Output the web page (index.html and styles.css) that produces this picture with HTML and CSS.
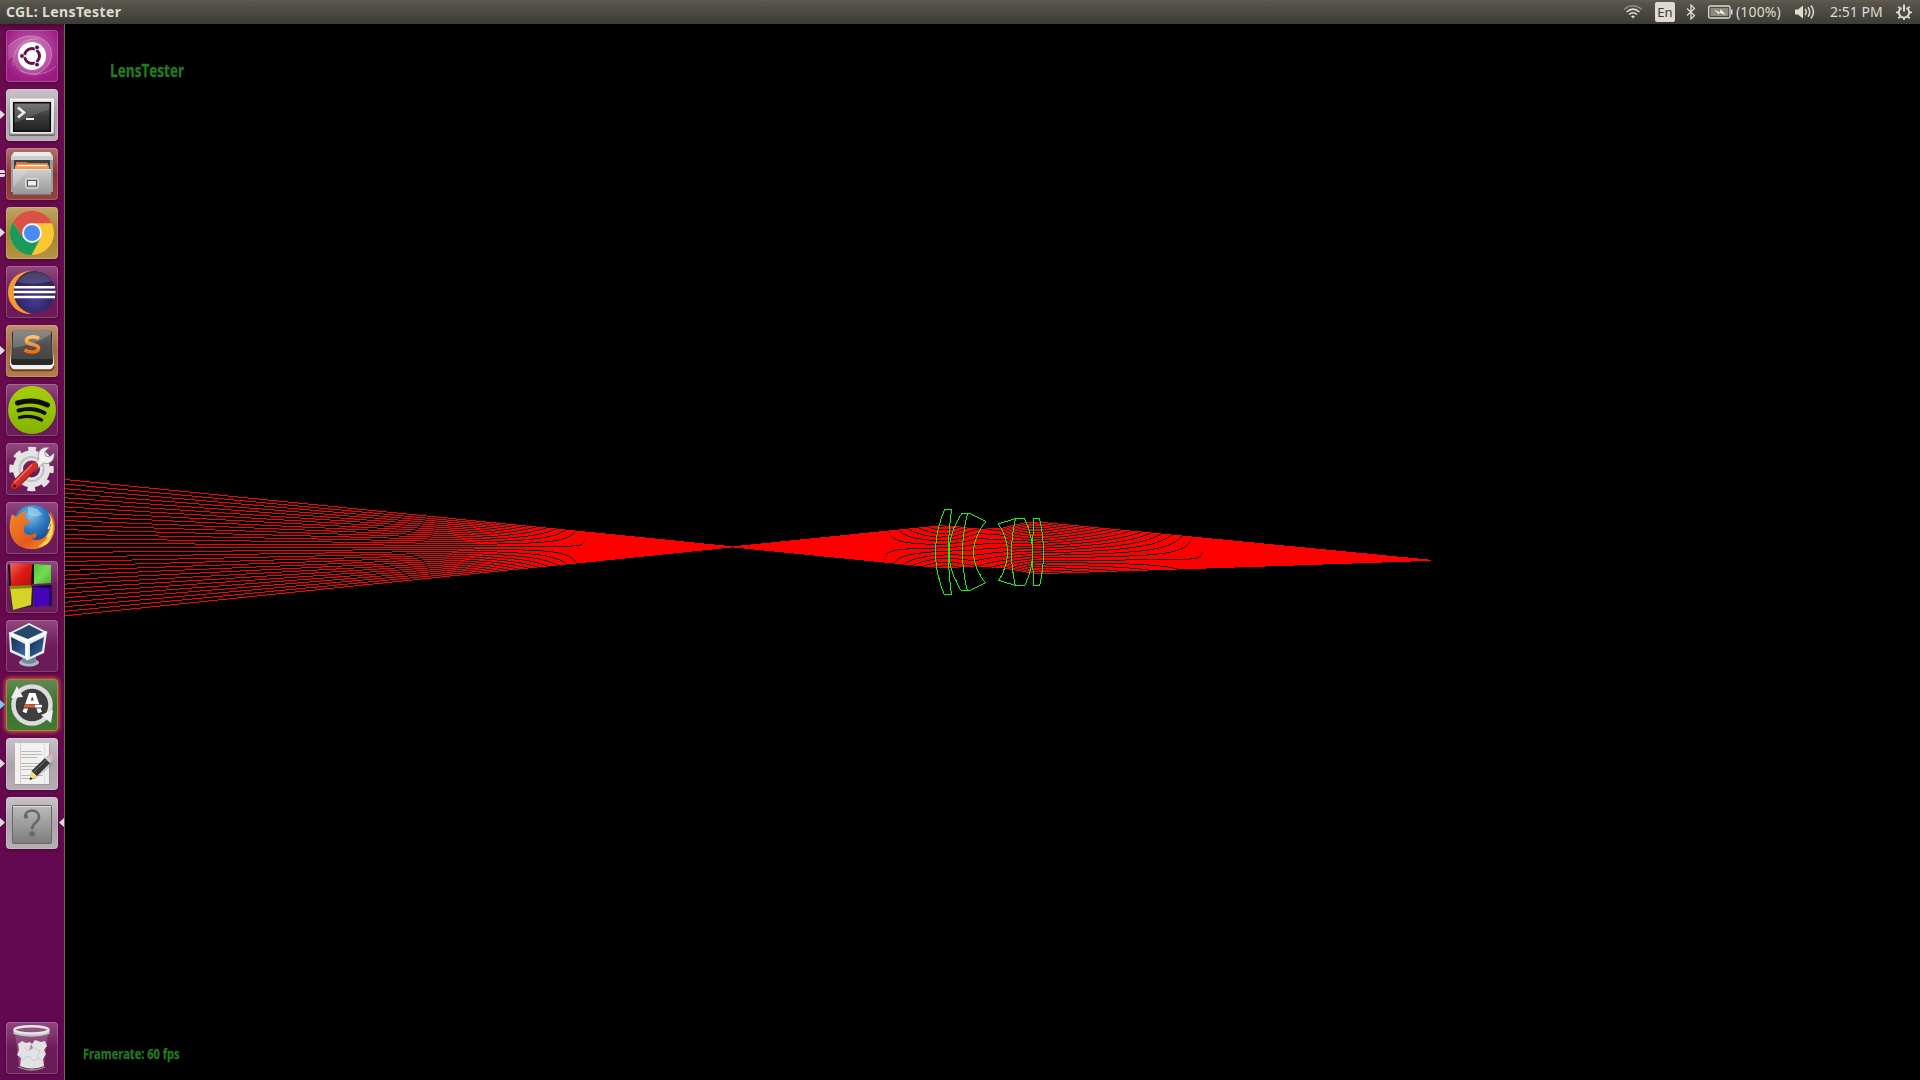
FILE: index.html
```html
<!DOCTYPE html>
<html lang="en">
<head>
<meta charset="utf-8">
<title>CGL: LensTester</title>
<link rel="stylesheet" href="styles.css">
</head>
<body>
<svg class="defs" width="0" height="0" aria-hidden="true">
  <defs>
    <linearGradient id="metal" x1="0" y1="0" x2="0" y2="1"><stop offset="0" stop-color="#f2f2f2"/><stop offset="1" stop-color="#9b9b9b"/></linearGradient>
    <linearGradient id="drawer" x1="0" y1="0" x2="0" y2="1"><stop offset="0" stop-color="#cfcfcf"/><stop offset="1" stop-color="#979797"/></linearGradient>
    <linearGradient id="screen" x1="0" y1="0" x2="0" y2="1"><stop offset="0" stop-color="#626262"/><stop offset=".5" stop-color="#3a3a3a"/><stop offset="1" stop-color="#222"/></linearGradient>
    <linearGradient id="keycap" x1="0" y1="0" x2="0" y2="1"><stop offset="0" stop-color="#6e6e6e"/><stop offset=".5" stop-color="#505050"/><stop offset="1" stop-color="#454545"/></linearGradient>
    <linearGradient id="grey" x1="0" y1="0" x2="0" y2="1"><stop offset="0" stop-color="#bcbcbc"/><stop offset="1" stop-color="#7c7c7c"/></linearGradient>
    <linearGradient id="folder" x1="0" y1="0" x2="0" y2="1"><stop offset="0" stop-color="#e2622c"/><stop offset="1" stop-color="#f7b96c"/></linearGradient>
    <radialGradient id="eclipse" cx=".5" cy=".65" r=".6"><stop offset="0" stop-color="#4a3c96"/><stop offset=".55" stop-color="#352a72"/><stop offset="1" stop-color="#2a2350"/></radialGradient>
    <linearGradient id="orange" x1="0" y1="0" x2="0" y2="1"><stop offset="0" stop-color="#ffc36b"/><stop offset="1" stop-color="#f56a0a"/></linearGradient>
    <linearGradient id="spot" x1="0" y1="0" x2="0" y2="1"><stop offset="0" stop-color="#a6d00c"/><stop offset="1" stop-color="#82b300"/></linearGradient>
    <radialGradient id="globe" cx=".45" cy=".25" r=".7"><stop offset="0" stop-color="#7fc4ea"/><stop offset=".5" stop-color="#2a76bd"/><stop offset="1" stop-color="#163f80"/></radialGradient>
    <linearGradient id="fox" x1="0" y1="0" x2="1" y2="1"><stop offset="0" stop-color="#f28a28"/><stop offset=".6" stop-color="#e45a1e"/><stop offset="1" stop-color="#f7a52a"/></linearGradient>
    <linearGradient id="redbox" x1="0" y1="0" x2="1" y2="1"><stop offset="0" stop-color="#f06a5c"/><stop offset=".5" stop-color="#dc1a14"/><stop offset="1" stop-color="#b80e0a"/></linearGradient>
    <linearGradient id="greenbox" x1="0" y1="0" x2="1" y2="1"><stop offset="0" stop-color="#4ec62c"/><stop offset=".5" stop-color="#74dc54"/><stop offset="1" stop-color="#44b822"/></linearGradient>
    <linearGradient id="vbox" x1="0" y1="0" x2="1" y2="1"><stop offset="0" stop-color="#132c4c"/><stop offset="1" stop-color="#3c6ea4"/></linearGradient>
  </defs>
</svg>

<header class="panel">
  <span class="panel-title">CGL: LensTester</span>
  <div class="indicators">
    <svg class="ind-wifi" width="20" height="16" viewBox="0 0 20 16" fill="none" stroke="#dfdbd2" stroke-width="1.5">
      <path d="M1 5.5Q10-1.8 19 5.5" stroke="#8f8c84"/><path d="M3.5 8Q10 2.3 16.500 8"/><path d="M6 10.500Q10 7 14 10.500"/><path d="M8 12.200L10 14.600L12 12.200Q10 10.800 8 12.200Z" fill="#dfdbd2" stroke="none"/>
    </svg>
    <span class="ind-lang">En</span>
    <svg class="ind-bt" width="10" height="16" viewBox="0 0 10 16" fill="none" stroke="#dfdbd2" stroke-width="1.300"><path d="M1 4.500L8.500 11.500L5 15V1L8.500 4.500L1 11.500"/></svg>
    <svg class="ind-bat" width="25" height="14" viewBox="0 0 25 14"><rect x=".7" y="1" width="21.300" height="12" rx="1.500" fill="none" stroke="#dfdbd2" stroke-width="1.300"/><path d="M23 4.500h1.500v5H23z" fill="#dfdbd2"/><rect x="2.500" y="3" width="17.700" height="8" fill="#8d8a82"/><path d="M6 4.500L12 7.500L12.500 4L18 10L11.500 7.800L11 9.500Z" fill="#f4f1ea"/></svg>
    <span class="ind-pct">(100%)</span>
    <svg class="ind-vol" width="21" height="16" viewBox="0 0 21 16" fill="none" stroke="#dfdbd2" stroke-width="1.500"><path d="M0 5.500H3L8 1.500V14.500L3 10.500H0Z" fill="#dfdbd2" stroke="none"/><path d="M10 5Q12.500 8 10 11"/><path d="M13 3.200Q16.500 8 13 12.800"/><path d="M16 1.500Q21 8 16 14.500"/></svg>
    <span class="ind-time">2:51 PM</span>
    <svg class="ind-gear" width="16" height="16" viewBox="0 0 16 16" fill="none" stroke="#dfdbd2"><path d="M5.600 3.800A5.200 5.200 0 1 0 10.400 3.800" stroke-width="1.900"/><path d="M8 .5V7.500" stroke-width="2"/><path d="M0 8.400H3M13 8.400H16M8 13.500V16M2.300 14.300L4.300 12.300M13.700 14.300L11.700 12.300M2.300 2.700L4 4.400M13.700 2.700L12 4.400" stroke-width="1.800"/></svg>
  </div>
</header>

<main class="desktop">
  <nav class="launcher">
    <div class="tile dash"><svg viewBox="0 0 52 52">
      <g fill="none" stroke="#fff" stroke-opacity=".3"><path d="M2 17C14 3 36 2 44 17C49 30 40 42 27 45"/><path d="M7 36C7 14 22 8 32 9"/><path d="M50 36C40 46 22 46 14 40"/></g>
      <path d="M2 17C14 3 36 2 44 17C49 30 40 42 27 45C12 44 7 36 8 26L2 30Z" fill="#fff" fill-opacity=".15"/>
      <circle cx="26" cy="26" r="14" fill="#fff"/>
      <circle cx="26" cy="26" r="7.500" fill="none" stroke="#5e1149" stroke-width="3"/>
      <path d="M26 26H15M26 26L31.500 16.500M26 26L31.500 35.500" stroke="#fff" stroke-width="1.300"/><circle cx="26" cy="26" r="5.500" fill="#fff"/>
      <g fill="#5e1149" stroke="#fff" stroke-width=".8"><circle cx="16" cy="26" r="2.400"/><circle cx="31" cy="17.400" r="2.400"/><circle cx="31" cy="34.600" r="2.400"/></g>
    </svg></div>

    <div class="tile silver running"><svg viewBox="0 0 52 52">
      <rect x="3" y="10" width="46" height="37" rx="2" fill="#6c6a6c"/><rect x="3.500" y="9.500" width="45" height="36" rx="1.500" fill="url(#metal)"/><rect x="5" y="11" width="42" height="33" fill="#d8d8d8" stroke="#fafafa"/>
      <rect x="7" y="13" width="38" height="30" fill="#0c0c0c"/><rect x="8.500" y="14.500" width="35" height="27" fill="url(#screen)"/><path d="M8.500 14.500H43.500V20L8.500 34Z" fill="#fff" opacity=".13"/>
      <path d="M12 18.500L18 23.500L12 28.500" fill="none" stroke="#eee" stroke-width="2.600"/><path d="M20 30H28" stroke="#eee" stroke-width="2"/>
    </svg></div>

    <div class="tile files running double"><svg viewBox="0 0 52 52">
      <path d="M8 4H44L47 8V44H5V8Z" fill="#9d9d9d"/><path d="M8 4H44L47 9H5Z" fill="#ececec"/><rect x="5" y="8" width="42" height="4" fill="#cdcdcd"/><rect x="8" y="12" width="36" height="12" fill="#33433f"/>
      <path d="M10 14H20L22 15H42V22H10Z" fill="url(#folder)"/><path d="M9 17.500H43V23H9Z" fill="#f39a4c"/><path d="M11 17.500H41" stroke="#fff" stroke-width="1.300"/><path d="M7 21H45V46.500H7Z" fill="url(#drawer)"/><path d="M7 21H22L7 40Z" fill="#fff" opacity=".18"/><path d="M7 21.500H45" stroke="#e2e2e2"/><path d="M7 46.500H45" stroke="#777"/>
      <rect x="19.500" y="30.500" width="13" height="10" rx="2" fill="#bbb" stroke="#dcdcdc"/><rect x="21.500" y="32.500" width="9" height="5.500" fill="#eee" stroke="#555"/>
    </svg></div>

    <div class="tile chrome running"><svg viewBox="0 0 52 52">
      <circle cx="26" cy="26" r="22" fill="#fbc735"/><path d="M6.900 15A22 22 0 0 0 25.500 48L34.500 31L17.500 31Z" fill="#179a5a"/><path d="M6.900 15L17.500 31L26 26V16.200H46A22 22 0 0 0 6.900 15Z" fill="#dc5146"/><circle cx="26" cy="26" r="9.900" fill="#f5f5f5"/><circle cx="26" cy="26" r="8" fill="#4a8af4"/>
    </svg></div>

    <div class="tile"><svg viewBox="0 0 52 52">
      <path d="M25 4.500C10 6 2 15 2 26.500C2 38 11 48 25 48C13 44 8 36 8 26C8 16 14 8 25 4.500Z" fill="#f9992e"/><circle cx="28.500" cy="26" r="20.800" fill="url(#eclipse)"/><path d="M11 16A21 21 0 0 1 46 15Q28 20 11 16Z" fill="#fff" opacity=".15"/>
      <path d="M8 21.200H49M7.500 26H49.500M8 31H49" stroke="#fff" stroke-width="2.400"/>
    </svg></div>

    <div class="tile sublime running"><svg viewBox="0 0 52 52">
      <path d="M6 10H46L48 39Q48 44 44 44H8Q4 44 4 39Z" fill="#f2f2f2"/><path d="M4 41Q5 45.500 9 45.500H43Q47 45.500 48 41" fill="none" stroke="#5b402a" stroke-width="1.500"/><path d="M8 6H44Q46 6 46 9L47 37Q47 40 44 40H8Q5 40 5 37L6 9Q6 6 8 6Z" fill="#292929"/><path d="M9 5.500H43Q45 5.500 45 9L46 34H6L7 9Q7 5.500 9 5.500Z" fill="url(#keycap)"/><path d="M7 6H45V9Q30 20 7 23Z" fill="#fff" opacity=".2"/>
      <path d="M33 13.500C29 10.800 20 11.500 20.500 16C21 20.500 32.500 18.500 32.500 23C32.500 28 23 28 18.500 25" fill="none" stroke="url(#orange)" stroke-width="3.600"/>
    </svg></div>

    <div class="tile"><svg viewBox="0 0 52 52"><circle cx="26" cy="26" r="24" fill="url(#spot)"/><g fill="none" stroke="#0c0f05" stroke-linecap="round"><path d="M11.500 19Q27 14 41.500 21" stroke-width="5"/><path d="M12.500 26.500Q27 22.500 38.500 29" stroke-width="4"/><path d="M13.500 33.500Q25 30.500 35.500 36" stroke-width="3.300"/></g></svg></div>

    <div class="tile"><svg viewBox="0 0 52 52">
      <circle cx="25.500" cy="26" r="13.500" fill="none" stroke="#e4e4e4" stroke-width="10"/><circle cx="25.500" cy="26" r="19.500" fill="none" stroke="#e4e4e4" stroke-width="5.500" stroke-dasharray="7.700 7.616" stroke-dashoffset="3.850"/><circle cx="25.500" cy="26" r="12" fill="none" stroke="#c0c0c0" stroke-width="2"/>
      <path d="M24 25L33 16C30 9 36 3 43 4.500L38.500 9L39.500 13L43.500 14L48 10C49 18 43 22 37.500 20L28 29Z" fill="#f0f0f0" stroke="#8c8c8c" stroke-width=".8"/><path d="M8.500 42.500L28 23" stroke="#9d1717" stroke-width="8.500" stroke-linecap="round"/><path d="M8.500 42.500L28.500 22.500" stroke="#cf2e2b" stroke-width="6.500" stroke-linecap="round"/><path d="M8 40L26 21.500" stroke="#ed7b72" stroke-width="1.500"/><circle cx="8.500" cy="43" r="1.600" fill="#5a0c0c"/>
    </svg></div>

    <div class="tile"><svg viewBox="0 0 52 52">
      <circle cx="27" cy="24" r="21" fill="url(#globe)"/><path d="M22 5Q30 4 36 12Q30 17 22 12Z" fill="#a9dcf2" opacity=".55"/>
      <path d="M44 9C52 20 50 36 40 43C30 50 14 48 8 39C2 31 3 20 6 12L10 15Q14 10 20 9L18 15L25 20L19 23Q15 32 24 33L30 31Q32 36 25 37Q37 41 42 30Q46 20 44 9Z" fill="url(#fox)"/><path d="M42 10Q53 25 42 41Q37 45 32 45Q42 38 44 29Q47 20 42 10Z" fill="#fbd24a"/><path d="M46 17L42 27L47 23L41 35L46 31" fill="none" stroke="#fff0a0"/>
    </svg></div>

    <div class="tile"><svg viewBox="0 0 52 52">
      <path d="M2 4L6 2V24L3 25Z" fill="#111"/><path d="M24 5L28 3V22L25 24Z" fill="#111"/><path d="M4 26L27 25V45L6 49Z" fill="#222"/><path d="M4 2L26 3L25 24L5 25Z" fill="url(#redbox)"/><path d="M28 3L45 4V22L28 23Z" fill="url(#greenbox)"/><path d="M4 26L26 26L25 44L7 49Z" fill="#d5d326"/><path d="M3 25L25 24L26 27L5 28Z" fill="#86840d"/><path d="M27 25L46 24V44L28 46Z" fill="#4405b8"/><path d="M28 25L46 24L42 27L27 26Z" fill="#180444"/><path d="M43 26V46L46 44V24Z" fill="#26046c"/>
    </svg></div>

    <div class="tile"><svg viewBox="0 0 52 52">
      <ellipse cx="23" cy="42.500" rx="10" ry="4" fill="#a9bccb"/><path d="M16 35H30V42Q23 46 16 42Z" fill="#748a9c"/><path d="M3 13L23 3L41 12L38 33L22 40L4 32Z" fill="#e5edf3"/><path d="M7 13L23 5L37 12L22 19Z" fill="#28486b"/><path d="M5 17L19 24V36L6 30Z" fill="url(#vbox)"/><path d="M24 24L38 17L36 31L24 37Z" fill="url(#vbox)"/><path d="M3 13L21 21L41 12M21 21V40" fill="none" stroke="#fff" stroke-width="2"/>
    </svg></div>

    <div class="tile updater running blue"><svg viewBox="0 0 52 52">
      <circle cx="26" cy="26" r="18.500" fill="#3f3f3f" stroke="#dcdcdc" stroke-width="4.500"/><path d="M5 19L11 7L17 18Z" fill="#eee"/><path d="M35 36L47 31L45 44Z" fill="#eee"/>
      <path d="M18.500 33.500L24.500 16H28L34 33.500M21 23.500H31" fill="none" stroke="#fff" stroke-width="4"/><path d="M15 25.300H37V29.500H15Z" fill="#3f3f3f"/><path d="M18 27.200H29" stroke="#f15a22" stroke-width="2.700"/><path d="M29 27.200H36" stroke="#fff" stroke-width="2.700"/>
    </svg></div>

    <div class="tile silver running"><svg viewBox="0 0 52 52">
      <rect x="9" y="6" width="35" height="41" fill="#888" opacity=".5"/><rect x="9" y="5" width="34" height="41" fill="#f1f1ef"/><path d="M14.500 5V46" stroke="#efb9b9" stroke-width=".8"/><path d="M38.500 5V46" stroke="#cfdcf2" stroke-width=".8"/><path d="M15 13.500H35M15 16.500H36M15 19.500H31M15 25.500H37M15 28.500H35M15 31.500H32M15 37.500H37M15 40.500H29" stroke="#b9b9b9"/>
      <path d="M26 39L40 22L48 26L29 41Z" fill="#777" opacity=".3"/><path d="M23.500 42L25.500 33L31 38Z" fill="#f2db78"/><path d="M23.500 42L24.500 39L27 41Z" fill="#222"/><path d="M25.500 33L39 20L44 25L31 38Z" fill="#383838"/><path d="M28 34L40 22" stroke="#777"/><path d="M39 20L41.500 17.500L46 22.500L44 25Z" fill="#ccc"/><path d="M41.500 17.500Q44 15 47 19Q48 21 46 22.500Z" fill="#eda7cb"/>
    </svg></div>

    <div class="tile silver running focused"><svg viewBox="0 0 52 52"><rect x="6.500" y="8.500" width="39" height="38" rx="1" fill="url(#grey)" stroke="#666"/><path d="M7.500 9.500H44.500" stroke="#e0e0e0"/><path d="M19 20C19 11.500 33 11.500 33 20C33 26 26 25 26 32.500" fill="none" stroke="#696969" stroke-width="2.600"/><circle cx="20" cy="19.500" r="2.200" fill="#696969"/><circle cx="26" cy="37" r="2.800" fill="#696969"/></svg></div>

    <div class="tile trash"><svg viewBox="0 0 52 52">
      <path d="M9 11L13 44Q26 50 38 44L42 11Z" fill="#fff" opacity=".16"/><path d="M12 22L16 19L20 21L24 20L26 22L29 18L35 20L39 19L41 24L38 28L40 32L37 37L38 44Q26 49 14 44L15 36L11 33L13 28Z" fill="#e2e2e2"/><path d="M25 22L27 26L23 29Z" fill="#6f2a60" opacity=".5"/><path d="M18 25L22 29L28 26L34 29L31 34L36 39M16 38L22 34L28 39L33 36" fill="none" stroke="#cbcbcb"/><path d="M12 45Q26 51 39 45" fill="none" stroke="#999" stroke-width="1.300"/>
      <path d="M7.500 8V12Q25.500 17.500 43.500 12V8Z" fill="#c3c6c0"/><ellipse cx="25.500" cy="7.800" rx="17" ry="3.600" fill="#8d5583" stroke="#e6e8e3" stroke-width="2.400"/>
    </svg></div>
  </nav>

  <section class="viewport">
    <canvas id="scene" width="1855" height="1056"></canvas>
    <div class="overlay">
      <span class="label scene-name">LensTester</span>
      <span class="label framerate">Framerate: 60 fps</span>
    </div>
  </section>
</main>
<script src="scene.js"></script>
</body>
</html>
```
FILE: styles.css
```css
* { box-sizing: border-box; }

body {
  margin: 0;
  width: 1920px;
  height: 1080px;
  overflow: hidden;
  display: flex;
  flex-direction: column;
  background: #000;
  font-family: "Noto Sans", sans-serif;
}

svg { display: block; flex: none; }
.defs { position: absolute; }

.panel {
  height: 24px;
  flex: none;
  display: flex;
  align-items: center;
  justify-content: space-between;
  padding: 0 8px 0 6px;
  background: linear-gradient(#5f5d52, #55534a 15%, #3c3b37);
  color: #dfdbd2;
  font-size: 14px;
  line-height: 24px;
  white-space: nowrap;
}
.panel-title { font-weight: 700; font-size: 14px; letter-spacing: .37px; }
.indicators { display: flex; align-items: center; }
.ind-lang {
  width: 20px;
  height: 20px;
  margin: 0 11px 0 12px;
  border-radius: 2px;
  background: #dfdbd2;
  color: #3c3b37;
  font-size: 13px;
  line-height: 20px;
  text-align: center;
}
.ind-bat { margin: 0 3px 0 12px; }
.ind-pct { width: 48px; letter-spacing: .15px; }
.ind-vol { margin: 0 14px 0 11px; }
.ind-time { width: 53px; }
.ind-gear { margin-left: 13px; }

.desktop { flex: 1; display: flex; min-height: 0; }

.launcher {
  width: 65px;
  flex: none;
  display: flex;
  flex-direction: column;
  gap: 7px;
  padding: 6px 6px;
  border-right: 1px solid #6c6c6c;
  background: linear-gradient(#4c0839, #690b4f 8px, #660a4e 60%, #620850);
}
.tile {
  position: relative;
  width: 52px;
  height: 52px;
  flex: none;
  border-radius: 4px;
  background: linear-gradient(#91487e, #6e1b59 50%, #6b1b57);
  box-shadow: inset 0 0 0 1px rgba(255, 255, 255, .18), 0 1px 3px rgba(0, 0, 0, .3);
}
.tile svg { width: 52px; height: 52px; }
.dash { background: radial-gradient(circle at 50% 40%, #c76fb4, #9d1a83 75%); }
.silver { background: linear-gradient(#c9c1c8, #aea3ac 50%, #b7adb5); }
.files { background: linear-gradient(#b0706f, #8b3434 50%, #944240); }
.chrome { background: linear-gradient(#bea568, #a5832f 50%, #b59444); }
.sublime { background: linear-gradient(#c09070, #a5693c 50%, #b47b4b); }
.updater {
  background: linear-gradient(#628b54, #367230 50%, #417c35);
  box-shadow: inset 0 0 0 1px #b9813c, 0 0 4px 1px #d96438;
}
.trash { margin-top: auto; margin-bottom: 0; }

.running::before {
  content: "";
  position: absolute;
  left: -6px;
  top: 21px;
  width: 5px;
  height: 9px;
  background: #dfdbe0;
  clip-path: polygon(0 0, 100% 50%, 0 100%);
}
.double::before {
  height: 7px;
  top: 22px;
  background: linear-gradient(#dfdbe0 3px, transparent 3px 4px, #dfdbe0 4px);
  clip-path: polygon(0 0, 80% 0, 100% 20%, 100% 80%, 80% 100%, 0 100%);
}
.blue::before { background: #7cc7ee; }
.focused::after {
  content: "";
  position: absolute;
  right: -6px;
  top: 21px;
  width: 5px;
  height: 9px;
  background: #dfdbe0;
  clip-path: polygon(100% 0, 0 50%, 100% 100%);
}

.viewport { flex: 1; display: grid; }
.viewport > * { grid-area: 1 / 1; }
#scene { display: block; }
.overlay {
  display: flex;
  flex-direction: column;
  justify-content: space-between;
  align-items: flex-start;
  padding: 33px 18px 15px;
}
.label {
  color: #1f7d1f;
  font-family: "Open Sans", sans-serif;
  font-weight: 700;
  white-space: nowrap;
  transform-origin: 0 50%;
  -webkit-text-stroke: .3px #1f7d1f;
}
.scene-name { margin-left: 27px; font-size: 18px; line-height: 26px; transform: scaleX(.755); }
.framerate { font-size: 14px; line-height: 22px; transform: scaleX(.79); }
```
FILE: scene.js
```javascript
const ctx = document.getElementById("scene").getContext("2d");
// Scene coordinates are screen coordinates; the view starts right of the launcher.
const OX = 65, OY = 24, AXIS = 552;

// Aliased line: one pixel per step along the major axis.
function line(x0, y0, x1, y1) {
  const dx = x1 - x0, dy = y1 - y0;
  if (Math.abs(dx) >= Math.abs(dy)) {
    if (dx < 0) return line(x1, y1, x0, y0);
    for (let x = Math.floor(x0); x <= Math.floor(x1); x++) {
      const t = Math.min(1, Math.max(0, (x - x0) / (dx || 1)));
      ctx.fillRect(x - OX, Math.floor(y0 + dy * t) - OY, 1, 1);
    }
  } else {
    if (dy < 0) return line(x1, y1, x0, y0);
    for (let y = Math.floor(y0); y <= Math.floor(y1); y++) {
      const t = Math.min(1, Math.max(0, (y - y0) / dy));
      ctx.fillRect(Math.floor(x0 + dx * t) - OX, y - OY, 1, 1);
    }
  }
}

// Refracting surfaces: apex x, rim x, half height, then top and bottom ray heights.
const surfaces = [
  [935.5, 944.5, 42.5, 525.9, 567.3],
  [948.5, 951.5, 42.5, 526.1, 567.5],
  [949.0, 961.5, 38.5, 526.2, 567.5],
  [962.5, 967.5, 38.5, 527.8, 566.6],
  [973.5, 985.5, 30.5, 529.3, 565.9],
  [1007.5, 998.5, 28.5, 528.3, 568.0],
  [1011.5, 1015.5, 33.5, 525.2, 569.7],
  [1032.5, 1024.5, 33.5, 522.4, 572.7],
  [1032.8, 1033.5, 33.5, 522.3, 573.1],
  [1043.5, 1039.5, 33.5, 522.3, 573.6]
];
const surfaceX = (s, y) => s[0] + (s[1] - s[0]) * ((y - AXIS) / s[2]) ** 2;

const RAYS = 31, FX = 732, FY = 546.85;
ctx.fillStyle = "#ff0000";
for (let i = 0; i < RAYS; i++) {
  // Slopes are evenly spaced, apart from a slight aberration near the axis.
  const slope = 0.10089 - i * 0.0068063 - 0.0003 * Math.sin(Math.PI * i / 30);
  line(OX, FY - slope * (FX - OX), FX, FY);
  let px = FX, py = FY;
  const u = (RAYS - 1 - i) / (RAYS - 1);
  for (const s of surfaces) {
    const y = s[3] + (s[4] - s[3]) * u;
    const x = surfaceX(s, y);
    line(px, py, x, y);
    px = x; py = y;
  }
  line(px, py, 1430.9, 560.3);
}

// Lens outlines.
ctx.fillStyle = "#00ff00";
function arc(s) {
  const n = 16;
  for (let i = 0; i < n; i++) {
    const a = AXIS + s[2] * (2 * i / n - 1), b = AXIS + s[2] * (2 * (i + 1) / n - 1);
    line(surfaceX(s, a), a, surfaceX(s, b), b);
  }
}
surfaces.forEach(arc);
function rim(x0, h0, x1, h1) {
  line(x0, AXIS - h0, x1, AXIS - h1);
  line(x0, AXIS + h0, x1, AXIS + h1);
}
rim(944.5, 42.5, 951.5, 42.5);
rim(961.5, 38.5, 969.5, 38.5);
rim(969.5, 38.5, 985.5, 30.5);
rim(998.5, 28.5, 1015.5, 33.5);
rim(1015.5, 33.5, 1024.5, 33.5);
rim(1033.5, 33.5, 1039.5, 33.5);
```
